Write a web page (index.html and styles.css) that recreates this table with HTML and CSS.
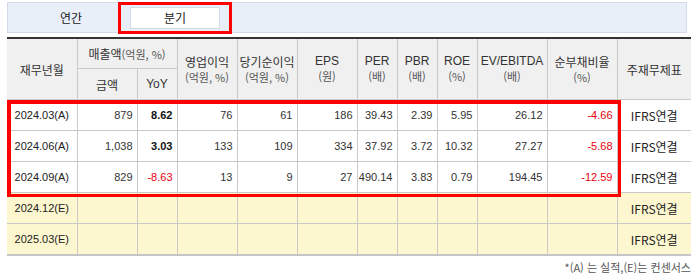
FILE: index.html
```html
<!DOCTYPE html>
<html lang="ko">
<head>
<meta charset="utf-8">
<link rel="stylesheet" href="styles.css">
</head>
<body>
<div class="wrap">
  <div class="tabs">
    <div class="tab">연간</div>
    <div class="tab active">분기</div>
    <div class="hl hl-tab"></div>
  </div>
  <div class="tbl-wrap">
    <table class="fin">
      <colgroup>
        <col class="w70"><col class="w60"><col class="w40"><col class="w60"><col class="w60"><col class="w60">
        <col class="w40"><col class="w40"><col class="w40"><col class="w70"><col class="w70"><col class="w74">
      </colgroup>
      <thead>
        <tr class="h1">
          <th rowspan="2">재무년월</th>
          <th colspan="2">매출액<span class="u">(억원, %)</span></th>
          <th rowspan="2">영업이익<br><span class="u2">(억원, %)</span></th>
          <th rowspan="2">당기순이익<br><span class="u2">(억원, %)</span></th>
          <th rowspan="2" class="en">EPS<br><span class="u2">(원)</span></th>
          <th rowspan="2" class="en">PER<br><span class="u2">(배)</span></th>
          <th rowspan="2" class="en">PBR<br><span class="u2">(배)</span></th>
          <th rowspan="2" class="en">ROE<br><span class="u2">(%)</span></th>
          <th rowspan="2" class="en">EV/EBITDA<br><span class="u2">(배)</span></th>
          <th rowspan="2">순부채비율<br><span class="u2">(%)</span></th>
          <th rowspan="2">주재무제표</th>
        </tr>
        <tr class="h2">
          <th>금액</th>
          <th class="en">YoY</th>
        </tr>
      </thead>
      <tbody>
        <tr>
          <td class="d">2024.03(A)</td><td>879</td><td class="b">8.62</td><td>76</td><td>61</td><td>186</td>
          <td>39.43</td><td>2.39</td><td>5.95</td><td>26.12</td><td class="neg">-4.66</td><td class="c">IFRS연결</td>
        </tr>
        <tr>
          <td class="d">2024.06(A)</td><td>1,038</td><td class="b">3.03</td><td>133</td><td>109</td><td>334</td>
          <td>37.92</td><td>3.72</td><td>10.32</td><td>27.27</td><td class="neg">-5.68</td><td class="c">IFRS연결</td>
        </tr>
        <tr>
          <td class="d">2024.09(A)</td><td>829</td><td class="neg">-8.63</td><td>13</td><td>9</td><td>27</td>
          <td>490.14</td><td>3.83</td><td>0.79</td><td>194.45</td><td class="neg">-12.59</td><td class="c">IFRS연결</td>
        </tr>
        <tr class="est">
          <td class="d">2024.12(E)</td><td></td><td></td><td></td><td></td><td></td>
          <td></td><td></td><td></td><td></td><td></td><td class="c">IFRS연결</td>
        </tr>
        <tr class="est">
          <td class="d">2025.03(E)</td><td></td><td></td><td></td><td></td><td></td>
          <td></td><td></td><td></td><td></td><td></td><td class="c">IFRS연결</td>
        </tr>
      </tbody>
    </table>
    <div class="hl hl-rows"></div>
  </div>
  <div class="note">*(A) 는 실적,(E)는 컨센서스</div>
</div>
</body>
</html>
```

FILE: styles.css
```css
html, body {
  margin: 0;
  padding: 0;
  background: #fff;
}
body {
  font-family: "Liberation Sans", "Noto Sans CJK KR", sans-serif;
  color: #333;
}
.wrap {
  padding: 2px 2px 0 7px;
  width: 684px;
}
.tabs {
  position: relative;
  box-sizing: border-box;
  width: 680px;
  height: 31px;
  background: #e8eff9;
  border: 1px solid #d3dbe8;
  display: flex;
  align-items: flex-start;
  padding: 4px 0 0 18px;
  gap: 14px;
}
.tab {
  box-sizing: border-box;
  width: 90px;
  height: 22px;
  line-height: 20px;
  text-align: center;
  font-family: "Noto Sans CJK KR", sans-serif;
  font-size: 12px;
  color: #222;
  border: 1px solid transparent;
}
.tab.active {
  background: #fff;
  border-color: #d3dbe8;
}
.hl {
  position: absolute;
  border: 3px solid #f00;
  box-sizing: border-box;
  pointer-events: none;
}
.hl-tab {
  left: 110px;
  top: -1px;
  width: 114px;
  height: 32px;
}
.tbl-wrap {
  position: relative;
  margin-top: 4px;
}
.fin {
  border-collapse: collapse;
  table-layout: fixed;
  width: 684px;
  border-top: 2px solid #333;
  border-bottom: 2px solid #c6c6c6;
}
.w70 { width: 70px; }
.w60 { width: 60px; }
.w40 { width: 40px; }
.w74 { width: 74px; }
.fin th, .fin td {
  border-left: 1px solid #c9c9c9;
  border-right: 1px solid #c9c9c9;
  border-bottom: 1px solid #c9c9c9;
  padding: 0;
  overflow: hidden;
  white-space: nowrap;
}
.fin tr > :first-child { border-left: none; }
.fin tr > :last-child { border-right: none; }
.fin th {
  background: #f0f0f0;
  font-family: "Noto Sans CJK KR", sans-serif;
  font-weight: normal;
  font-size: 12px;
  line-height: 15px;
  color: #333;
  text-align: center;
}
.fin th.en {
  font-family: "Liberation Sans", "Noto Sans CJK KR", sans-serif;
}
.fin .h1 th { height: 29px; }
.fin .h2 th { height: 30px; }
.fin .u {
  font-size: 11px;
  color: #555;
}
.fin .u2 {
  font-family: "Noto Sans CJK KR", sans-serif;
  font-size: 11px;
  color: #555;
}
.fin td {
  height: 30px;
  font-size: 11px;
  text-align: right;
  padding-right: 4px;
  color: #333;
}
.fin td.d {
  text-align: center;
  padding-right: 0;
  color: #222;
}
.fin td.c {
  text-align: center;
  padding-right: 0;
  font-family: "Noto Sans CJK KR", sans-serif;
  font-size: 12px;
  color: #222;
}
.fin td.b {
  font-weight: bold;
  color: #111;
}
.fin td.neg { color: #e8000b; }
.fin tr.est td { background: #fdf7cf; }
.hl-rows {
  left: 0;
  top: 63px;
  width: 614px;
  height: 97px;
  border-width: 4px 3px 3px 4px;
}
.note {
  text-align: right;
  font-family: "Noto Sans CJK KR", sans-serif;
  font-size: 11px;
  color: #555;
  margin-top: 3px;
  padding-right: 0;
}
```
